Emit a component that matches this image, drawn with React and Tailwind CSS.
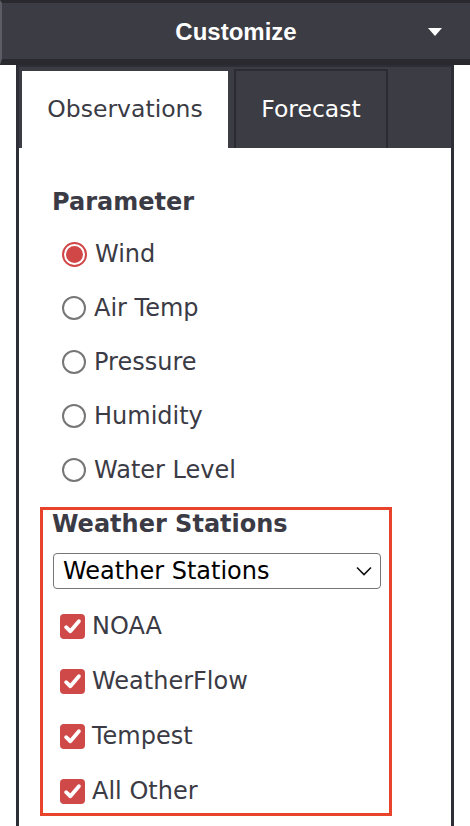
import { useState } from "react";

const params = ["Wind", "Air Temp", "Pressure", "Humidity", "Water Level"];
const stations = ["NOAA", "WeatherFlow", "Tempest", "All Other"];

function Radio({ checked }) {
  if (checked) {
    return (
      <span className="flex h-[25px] w-[25px] shrink-0 items-center justify-center rounded-full border-[2px] border-[#d14646] bg-white">
        <span className="h-[17px] w-[17px] rounded-full bg-[#d14646]" />
      </span>
    );
  }
  return <span className="h-[24px] w-[24px] shrink-0 rounded-full border-[2px] border-[#767676] bg-white" />;
}

function Checkbox() {
  return (
    <span className="flex h-[25px] w-[25px] shrink-0 items-center justify-center rounded-[4px] bg-[#d04949]">
      <svg width="19" height="19" viewBox="0 0 16 16">
        <path d="M2.6 8.6 L6.2 12 L13.4 3.6" fill="none" stroke="#fff" strokeWidth="3.2" strokeLinecap="round" strokeLinejoin="round" />
      </svg>
    </span>
  );
}

export default function App() {
  const [param, setParam] = useState("Wind");

  return (
    <div className="flex h-[826px] w-[470px] flex-col overflow-hidden bg-white font-['DejaVu_Sans',sans-serif] text-[#3b3b45]">
      {/* top bar */}
      <div className="relative flex h-[65px] shrink-0 items-center justify-center border-t-[3px] border-b-[6px] border-l-[2px] border-t-[#29292f] border-b-[#29292f] border-l-[#5c5c64] bg-[#3c3c44]">
        <span className="mt-[2px] font-['Liberation_Sans',Arial,sans-serif] text-[24px] font-bold text-white">Customize</span>
        <span className="absolute right-[28px] top-[25px] h-0 w-0 border-x-[7px] border-t-[8px] border-x-transparent border-t-white" />
      </div>

      <div className="ml-[16px] flex w-[438px] flex-1 flex-col border-x-[3px] border-[#2e2e36]">
        {/* tabs */}
        <div className="flex h-[83px] shrink-0 items-end border-t-[2px] border-[#2e2e36] bg-[#3c3c44] pl-[3px]">
          <div className="flex h-[77px] w-[206px] items-center justify-center bg-white text-[23.5px] text-[#3b3b45]">
            Observations
          </div>
          <div className="ml-[6px] flex h-[79px] w-[154px] items-center justify-center border-[2px] border-b-0 border-[#2b2b32] bg-[#3c3c44] text-[23.5px] text-white">
            Forecast
          </div>
        </div>

        {/* body */}
        <div className="flex flex-col pt-[39px]">
          <div className="pl-[33px] text-[24px] font-bold leading-[30px]">Parameter</div>
          <div className="mt-[10px] flex flex-col">
            {params.map((p) => (
              <div
                key={p}
                onClick={() => setParam(p)}
                className="flex h-[54px] cursor-pointer items-center gap-[8px] pl-[43px] text-[24px]"
              >
                <Radio checked={param === p} />
                <span>{p}</span>
              </div>
            ))}
          </div>

          <div className="ml-[21px] mt-[10px] flex h-[309px] w-[352px] flex-col border-[3px] border-[#e8432b]">
            <div className="-mt-[1px] pl-[9px] text-[24px] font-bold leading-[30px]">Weather Stations</div>
            <div className="ml-[10px] mt-[14px] flex h-[36px] w-[328px] items-center justify-between rounded-[4px] border border-[#767676] pl-[9px] pr-[8px] text-[24px] text-black">
              <span>Weather Stations</span>
              <svg width="16" height="10" viewBox="0 0 16 10">
                <path d="M1 1.5 L8 8.5 L15 1.5" fill="none" stroke="#111" strokeWidth="1.6" />
              </svg>
            </div>
            <div className="mt-[17px] flex flex-col gap-[15px]">
              {stations.map((s) => (
                <div key={s} className="flex h-[40px] items-center gap-[7px] pl-[17px] text-[24px]">
                  <Checkbox />
                  <span>{s}</span>
                </div>
              ))}
            </div>
          </div>
        </div>
      </div>
    </div>
  );
}
